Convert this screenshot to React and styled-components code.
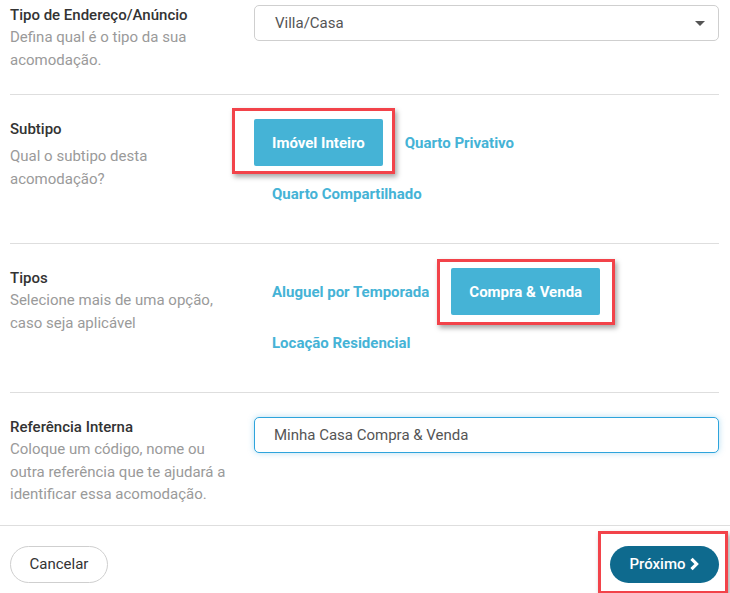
import React, { useState } from 'react';
import styled, { createGlobalStyle } from 'styled-components';

const GlobalStyle = createGlobalStyle`
  body {
    margin: 0;
    background: #fff;
    font-family: Roboto, "Liberation Sans", Arial, sans-serif;
  }
`;

const subtypes = ['Imóvel Inteiro', 'Quarto Privativo', 'Quarto Compartilhado'];
const kinds = ['Aluguel por Temporada', 'Compra & Venda', 'Locação Residencial'];

export default function App() {
  const [subtype, setSubtype] = useState('Imóvel Inteiro');
  const [kind, setKind] = useState(['Compra & Venda']);
  const [reference, setReference] = useState('Minha Casa Compra & Venda');

  const toggleKind = (item) => {
    setKind((prev) => (prev.includes(item) ? prev.filter((k) => k !== item) : [...prev, item]));
  };

  return (
    <Page>
      <GlobalStyle />
      <Form>
        <Row $first>
          <Aside>
            <Title>Tipo de Endereço/Anúncio</Title>
            <Description>Defina qual é o tipo da sua acomodação.</Description>
          </Aside>
          <SelectBox>
            <span>Villa/Casa</span>
            <Caret />
          </SelectBox>
        </Row>

        <Row>
          <Aside>
            <Title $spaced>Subtipo</Title>
            <Description>Qual o subtipo desta acomodação?</Description>
          </Aside>
          <Options>
            {subtypes.map((item) => (
              <Highlight
                key={item}
                $on={subtype === item}
                $box="-11px -12px -8px -22px"
              >
                <Option
                  type="button"
                  $active={subtype === item}
                  onClick={() => setSubtype(item)}
                >
                  {item}
                </Option>
              </Highlight>
            ))}
          </Options>
        </Row>

        <Row>
          <Aside>
            <Title>Tipos</Title>
            <Description>Selecione mais de uma opção, caso seja aplicável</Description>
          </Aside>
          <Options>
            {kinds.map((item) => (
              <Highlight
                key={item}
                $on={kind.includes(item)}
                $box="-9px -15px -10px -14px"
              >
                <Option
                  type="button"
                  $active={kind.includes(item)}
                  onClick={() => toggleKind(item)}
                >
                  {item}
                </Option>
              </Highlight>
            ))}
          </Options>
        </Row>

        <Row $last>
          <Aside>
            <Title>Referência Interna</Title>
            <Description>
              Coloque um código, nome ou outra referência que te ajudará a identificar essa acomodação.
            </Description>
          </Aside>
          <Field>
            <Input
              type="text"
              value={reference}
              onChange={(event) => setReference(event.target.value)}
            />
          </Field>
        </Row>
      </Form>

      <Footer>
        <CancelButton type="button">Cancelar</CancelButton>
        <Highlight $on $box="-15px -9px -11px -12px">
          <NextButton type="button">
            Próximo
            <svg width="11" height="14" viewBox="0 0 11 14" aria-hidden="true">
              <path d="M2.5 1.8 L7.6 7 L2.5 12.2" fill="none" stroke="#fff" strokeWidth="3.2" strokeLinejoin="miter" />
            </svg>
          </NextButton>
        </Highlight>
      </Footer>
    </Page>
  );
}

const Page = styled.main`
  width: 730px;
  min-height: 593px;
  overflow: hidden;
`;

const Form = styled.form`
  padding: 0 11px 0 10px;
`;

const Row = styled.section`
  display: grid;
  grid-template-columns: 244px 1fr;
  align-items: start;
  padding: ${({ $first }) => ($first ? '5px 0 23px' : '24px 0 26px')};
  border-bottom: ${({ $last }) => ($last ? 'none' : '1px solid #dedede')};
  ${({ $last }) => $last && 'padding-bottom: 19px;'}
`;

const Aside = styled.div`
  width: 228px;
  margin-top: -1px;
`;

const Title = styled.h3`
  margin: 0 0 ${({ $spaced }) => ($spaced ? '5px' : '0')};
  font-size: 15px;
  line-height: 22px;
  font-weight: 500;
  color: #333;
`;

const Description = styled.p`
  margin: 0;
  font-size: 15px;
  line-height: 22.5px;
  color: #9a9a9a;
`;

const SelectBox = styled.div`
  height: 36px;
  box-sizing: border-box;
  border: 1px solid #cfcfcf;
  border-radius: 5px;
  padding: 0 13px 0 20px;
  display: flex;
  align-items: center;
  justify-content: space-between;
  font-size: 15px;
  color: #555;
`;

const Caret = styled.span`
  width: 0;
  height: 0;
  border-left: 5px solid transparent;
  border-right: 5px solid transparent;
  border-top: 5px solid #555;
`;

const Options = styled.div`
  display: flex;
  flex-wrap: wrap;
  gap: 4px 4px;
`;

const Highlight = styled.div`
  position: relative;
  display: inline-flex;

  &::after {
    content: '';
    display: ${({ $on }) => ($on ? 'block' : 'none')};
    position: absolute;
    inset: ${({ $box }) => $box};
    border: 3px solid #f2434a;
    box-shadow: 2px 3px 5px rgba(0, 0, 0, 0.35);
    pointer-events: none;
  }
`;

const Option = styled.button`
  height: 47px;
  padding: 0 18px;
  border: none;
  border-radius: 2px;
  background: ${({ $active }) => ($active ? '#45b3d6' : 'transparent')};
  color: ${({ $active }) => ($active ? '#fff' : '#45b3d6')};
  font-family: inherit;
  font-size: 15px;
  font-weight: 700;
  cursor: pointer;
`;

const Field = styled.div`
  display: flex;
`;

const Input = styled.input`
  width: 100%;
  height: 36px;
  box-sizing: border-box;
  border: 1px solid #2ea4dc;
  border-radius: 5px;
  padding: 0 19px;
  font-family: inherit;
  font-size: 15px;
  color: #555;
  box-shadow: 0 0 6px rgba(46, 164, 220, 0.35);
  outline: none;
`;

const Footer = styled.footer`
  display: flex;
  justify-content: space-between;
  align-items: center;
  padding: 20px 11px 12px 10px;
  border-top: 1px solid #dedede;
`;

const CancelButton = styled.button`
  width: 98px;
  height: 37px;
  border: 1px solid #cfcfcf;
  border-radius: 19px;
  background: #fff;
  color: #333;
  font-family: inherit;
  font-size: 15px;
  cursor: pointer;
`;

const NextButton = styled.button`
  width: 109px;
  height: 37px;
  border: none;
  border-radius: 19px;
  background: #0e6a8e;
  color: #fff;
  font-family: inherit;
  font-size: 15px;
  font-weight: 500;
  display: flex;
  align-items: center;
  justify-content: center;
  gap: 3px;
  cursor: pointer;
`;
